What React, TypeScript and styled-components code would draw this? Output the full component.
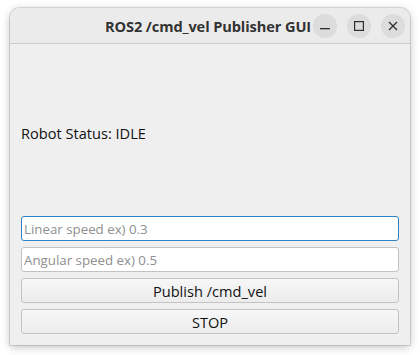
import React from "react";
import styled, { createGlobalStyle } from "styled-components";

const Global = createGlobalStyle`
  html, body { margin: 0; padding: 0; background: #ffffff; }
  body { font-family: "Open Sans", "Noto Sans", sans-serif; }
`;

const Page = styled.div`
  padding: 8px 10px 10px 10px;
`;

const Window = styled.div`
  width: 400px;
  height: 337px;
  display: flex;
  flex-direction: column;
  background: #efefef;
  border-radius: 10px 10px 0 0;
  box-shadow: 0 0 0 1px rgba(0,0,0,0.12), 0 2px 8px rgba(0,0,0,0.25);
  overflow: hidden;
`;

const TitleBar = styled.div`
  position: relative;
  height: 35px;
  flex: none;
  display: flex;
  align-items: center;
  justify-content: center;
  background: #ebebeb;
  border-bottom: 1px solid #cbcbcb;
`;

const Title = styled.div`
  font-family: "Open Sans", "Noto Sans", sans-serif;
  font-weight: 700;
  font-size: 14.6px;
  color: #333333;
  letter-spacing: -0.1px;
  margin-left: -4px;
`;

const Controls = styled.div`
  position: absolute;
  right: 5px;
  top: 6px;
  display: flex;
  gap: 10px;
`;

const CtrlButton = styled.div`
  width: 24px;
  height: 24px;
  border-radius: 50%;
  background: #dcdcdc;
  display: flex;
  align-items: center;
  justify-content: center;
  color: #2e2e2e;
`;

const Content = styled.div`
  flex: 1;
  display: flex;
  flex-direction: column;
  padding: 11px;
  gap: 6px;
`;

const Status = styled.div`
  flex: 1;
  display: flex;
  align-items: center;
  font-size: 14.6px;
  color: #111111;
`;

const Input = styled.input<{ $focused?: boolean }>`
  box-sizing: border-box;
  height: 25px;
  width: 100%;
  margin: 0;
  padding: 0 2px;
  background: #ffffff;
  border: 1px solid ${(p) => (p.$focused ? "#3081c6" : "#c2c2c2")};
  border-radius: 3px;
  font-family: "Open Sans", "Noto Sans", sans-serif;
  font-size: 13.3px;
  color: #1a1a1a;
  outline: none;
  &::placeholder { color: #8f8f8f; }
`;

const Button = styled.button`
  box-sizing: border-box;
  height: 25px;
  width: 100%;
  margin: 0;
  padding: 0;
  border: 1px solid #c4c4c4;
  border-radius: 3px;
  background: linear-gradient(#f7f7f7, #ececec);
  font-family: "Open Sans", "Noto Sans", sans-serif;
  font-size: 14.6px;
  color: #111111;
`;

export default function App() {
  return (
    <>
      <Global />
      <Page>
        <Window>
          <TitleBar>
            <Title>ROS2 /cmd_vel Publisher GUI</Title>
            <Controls>
              <CtrlButton>
                <svg width="10" height="10" viewBox="0 0 10 10">
                  <rect x="0" y="7" width="10" height="1.3" fill="currentColor" />
                </svg>
              </CtrlButton>
              <CtrlButton>
                <svg width="10" height="10" viewBox="0 0 10 10">
                  <rect x="0.6" y="0.6" width="8.8" height="8.8" fill="none" stroke="currentColor" strokeWidth="1.2" />
                </svg>
              </CtrlButton>
              <CtrlButton>
                <svg width="10" height="10" viewBox="0 0 10 10">
                  <path d="M1 1 L9 9 M9 1 L1 9" stroke="currentColor" strokeWidth="1.3" />
                </svg>
              </CtrlButton>
            </Controls>
          </TitleBar>
          <Content>
            <Status>Robot Status: IDLE</Status>
            <Input $focused placeholder="Linear speed ex) 0.3" />
            <Input placeholder="Angular speed ex) 0.5" />
            <Button>Publish /cmd_vel</Button>
            <Button>STOP</Button>
          </Content>
        </Window>
      </Page>
    </>
  );
}
